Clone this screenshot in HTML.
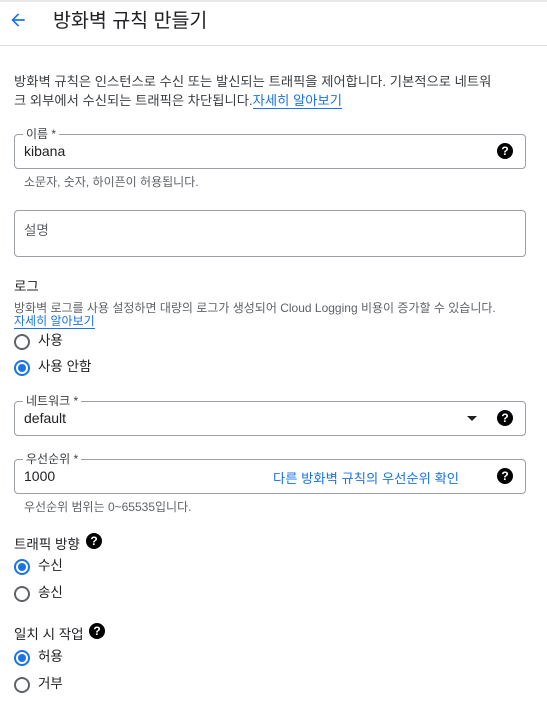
<!DOCTYPE html>
<html><head><meta charset="utf-8"><style>
*{margin:0;padding:0;box-sizing:border-box}
body{width:547px;height:706px;background:#fff;font-family:"Liberation Sans","Noto Sans CJK KR",sans-serif;color:#202124;position:relative;overflow:hidden}
.a{position:absolute;white-space:nowrap}
.box{position:absolute;left:14px;width:512px;border:1px solid #9aa0a6;border-radius:4px}
.lbl{position:absolute;left:8px;top:-9px;background:#fff;padding:0 3px;font-size:12px;color:#3c4043;line-height:16px}
.q{position:absolute;width:16px;height:16px;border-radius:50%;background:#000;color:#fff;font-size:12px;font-weight:bold;text-align:center;line-height:16px}
.r{position:absolute;left:14px;width:16px;height:16px;border-radius:50%;border:2px solid #5f6368}
.r.on{border-color:#1a73e8}
.r.on::after{content:"";position:absolute;left:2px;top:2px;width:8px;height:8px;border-radius:50%;background:#1a73e8}
.rt{position:absolute;left:38px;font-size:13.5px;line-height:16px;color:#202124}
a{color:#1a73e8;text-decoration:none;border-bottom:1px solid #1a73e8}
</style></head><body>
<div style="position:absolute;top:0;left:0;width:547px;height:2px;background:#e8e8e8"></div>
<svg class="a" style="left:8px;top:10px" width="20" height="20" viewBox="0 0 24 24"><path d="M20 11H7.8l5.6-5.6L12 4l-8 8 8 8 1.4-1.4L7.8 13H20z" fill="#1a73e8"/></svg>
<div class="a" style="left:53px;top:8px;font-size:19.5px;line-height:26px;color:#202124">방화벽 규칙 만들기</div>
<div style="position:absolute;top:45px;left:0;width:547px;height:1px;background:#dadce0"></div>
<div class="a" style="left:14px;top:72px;font-size:13.3px;line-height:19px;color:#3c4043">방화벽 규칙은 인스턴스로 수신 또는 발신되는 트래픽을 제어합니다. 기본적으로 네트워<br>크 외부에서 수신되는 트래픽은 차단됩니다.<a>자세히 알아보기</a></div>
<div class="box" style="top:134px;height:35px"><div class="lbl">이름 *</div><div class="a" style="left:9px;top:8px;font-size:14px">kibana</div><div class="q" style="left:482px;top:8px">?</div></div>
<div class="a" style="left:24px;top:173px;font-size:12px;color:#5f6368">소문자, 숫자, 하이픈이 허용됩니다.</div>
<div class="box" style="top:210px;height:47px"><div class="a" style="left:9px;top:8px;font-size:13.5px;color:#5f6368">설명</div></div>
<div class="a" style="left:14px;top:275px;font-size:13.5px">로그</div>
<div class="a" style="left:14px;top:299px;font-size:12px;color:#5f6368">방화벽 로그를 사용 설정하면 대량의 로그가 생성되어 Cloud Logging 비용이 증가할 수 있습니다.</div>
<div class="a" style="left:14px;top:314px;font-size:12px;line-height:14px"><a>자세히 알아보기</a></div>
<div class="r" style="top:334px"></div><div class="rt" style="top:333px">사용</div>
<div class="r on" style="top:360px"></div><div class="rt" style="top:359px">사용 안함</div>
<div class="box" style="top:401px;height:35px"><div class="lbl">네트워크 *</div><div class="a" style="left:9px;top:8px;font-size:14px">default</div><div class="a" style="left:452px;top:14px;width:0;height:0;border-left:5px solid transparent;border-right:5px solid transparent;border-top:5px solid #202124"></div><div class="q" style="left:482px;top:8px">?</div></div>
<div class="box" style="top:459px;height:35px"><div class="lbl">우선순위 *</div><div class="a" style="left:9px;top:8px;font-size:14px">1000</div><div class="a" style="left:258px;top:8px;font-size:13.3px;color:#1a73e8">다른 방화벽 규칙의 우선순위 확인</div><div class="q" style="left:482px;top:8px">?</div></div>
<div class="a" style="left:24px;top:498px;font-size:12px;color:#5f6368">우선순위 범위는 0~65535입니다.</div>
<div class="a" style="left:14px;top:533px;font-size:13.5px">트래픽 방향</div><div class="q" style="left:86px;top:533px">?</div>
<div class="r on" style="top:559px"></div><div class="rt" style="top:558px">수신</div>
<div class="r" style="top:586px"></div><div class="rt" style="top:585px">송신</div>
<div class="a" style="left:14px;top:623px;font-size:13.5px">일치 시 작업</div><div class="q" style="left:89px;top:623px">?</div>
<div class="r on" style="top:650px"></div><div class="rt" style="top:649px">허용</div>
<div class="r" style="top:677px"></div><div class="rt" style="top:676px">거부</div>
</body></html>
